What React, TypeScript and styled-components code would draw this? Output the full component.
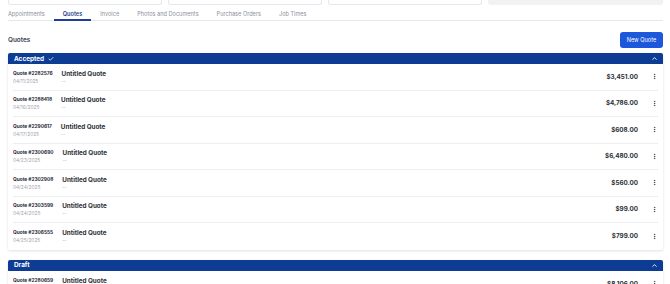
import React from "react";
import styled, { createGlobalStyle } from "styled-components";
import { Check, ChevronUp, EllipsisVertical } from "lucide-react";

type Quote = { number: string; date: string; title: string; total: string };

const accepted: Quote[] = [
	{ number: "2282576", date: "04/11/2025", title: "Untitled Quote", total: "$3,451.00" },
	{ number: "2288418", date: "04/16/2025", title: "Untitled Quote", total: "$4,786.00" },
	{ number: "2290617", date: "04/17/2025", title: "Untitled Quote", total: "$608.00" },
	{ number: "2300690", date: "04/23/2025", title: "Untitled Quote", total: "$6,480.00" },
	{ number: "2302908", date: "04/24/2025", title: "Untitled Quote", total: "$560.00" },
	{ number: "2303599", date: "04/24/2025", title: "Untitled Quote", total: "$99.00" },
	{ number: "2306555", date: "04/25/2025", title: "Untitled Quote", total: "$799.00" },
];

const drafts: Quote[] = [
	{ number: "2280659", date: "04/10/2025", title: "Untitled Quote", total: "$8,106.00" },
];

const tabs = ["Appointments", "Quotes", "Invoice", "Photos and Documents", "Purchase Orders", "Job Times"];

const GlobalStyle = createGlobalStyle`
	html {
		overflow: hidden;
	}
	body {
		margin: 0;
		background: #ffffff;
		font-family: Inter, "Liberation Sans", sans-serif;
		color: #1f2937;
	}
`;

const QuoteGroup = ({ label, quotes, done }: { label: string; quotes: Quote[]; done?: boolean }) => (
	<GroupCard>
		<GroupHeader>
			<GroupLabel>
				{label}
				{done && <Check size={6} strokeWidth={3} />}
			</GroupLabel>
			<ChevronUp size={7} strokeWidth={3} />
		</GroupHeader>
		{quotes.map((q) => (
			<QuoteRow key={q.number}>
				<QuoteMeta>
					<QuoteNumber>Quote #{q.number}</QuoteNumber>
					<SubText>{q.date}</SubText>
				</QuoteMeta>
				<QuoteInfo>
					<QuoteTitle>{q.title}</QuoteTitle>
					<SubText>--</SubText>
				</QuoteInfo>
				<QuoteTotal>{q.total}</QuoteTotal>
				<MenuButton>
					<EllipsisVertical size={7} strokeWidth={2.5} />
				</MenuButton>
			</QuoteRow>
		))}
	</GroupCard>
);

export default function App() {
	return (
		<Page>
			<GlobalStyle />
			<FieldRow>
				<Field />
				<Field />
				<Field />
				<Field $disabled />
			</FieldRow>
			<TabBar>
				{tabs.map((t) => (
					<Tab key={t} $active={t === "Quotes"}>
						{t}
					</Tab>
				))}
			</TabBar>
			<SectionHeader>
				<SectionTitle>Quotes</SectionTitle>
				<PrimaryButton>New Quote</PrimaryButton>
			</SectionHeader>
			<QuoteGroup label="Accepted" quotes={accepted} done />
			<QuoteGroup label="Draft" quotes={drafts} />
		</Page>
	);
}

const Page = styled.div`
	padding: 0 7px 0 8px;
	display: flex;
	flex-direction: column;
`;

const FieldRow = styled.div`
	display: grid;
	grid-template-columns: 154px 154px 154px 1fr;
	gap: 6px;
	height: 5px;
`;

const Field = styled.div<{ $disabled?: boolean }>`
	border: 1px solid #e5e7eb;
	border-top: none;
	border-radius: 0 0 3px 3px;
	background: ${({ $disabled }) => ($disabled ? "#f1f2f4" : "#ffffff")};
	border-color: ${({ $disabled }) => ($disabled ? "#f1f2f4" : "#e5e7eb")};
`;

const TabBar = styled.div`
	display: flex;
	margin-top: 3px;
	border-bottom: 1px solid #e5e7eb;
`;

const Tab = styled.div<{ $active?: boolean }>`
	padding: 2px 9px 1px;
	font-size: 5.6px;
	line-height: 8px;
	font-weight: ${({ $active }) => ($active ? 600 : 400)};
	color: ${({ $active }) => ($active ? "#1e3a8a" : "#8b9099")};
	border-bottom: 2px solid ${({ $active }) => ($active ? "#1e3f99" : "transparent")};
	margin-bottom: -1px;

	&:first-child {
		padding-left: 0;
	}
`;

const SectionHeader = styled.div`
	display: flex;
	align-items: center;
	justify-content: space-between;
	margin-top: 11px;
	margin-bottom: 5px;
`;

const SectionTitle = styled.div`
	font-size: 6.4px;
	font-weight: 600;
	color: #374151;
`;

const PrimaryButton = styled.button`
	width: 43px;
	height: 16px;
	padding: 0;
	border: none;
	border-radius: 3px;
	background: #1d57db;
	color: #ffffff;
	font-family: Inter, "Liberation Sans", sans-serif;
	font-size: 5.6px;
	cursor: pointer;
`;

const GroupCard = styled.div`
	background: #ffffff;
	border-radius: 2px;
	box-shadow: 0 1px 3px rgba(0, 0, 0, 0.12);
	margin-bottom: 10px;
`;

const GroupHeader = styled.div`
	display: flex;
	align-items: center;
	justify-content: space-between;
	height: 11px;
	padding: 0 5px 0 6px;
	background: #0c3c93;
	color: #ffffff;
	border-radius: 2px 2px 0 0;
`;

const GroupLabel = styled.div`
	display: flex;
	align-items: center;
	gap: 4px;
	font-size: 6.4px;
	font-weight: 700;
`;

const QuoteRow = styled.div`
	display: flex;
	align-items: center;
	gap: 9px;
	height: 26.5px;
	margin: 0 5px;
	box-sizing: border-box;
	border-bottom: 1px solid #eceef1;

	&:last-child {
		border-bottom: none;
	}
`;

const QuoteMeta = styled.div`
	display: flex;
	flex-direction: column;
	gap: 2px;
`;

const QuoteNumber = styled.div`
	font-size: 4.8px;
	font-weight: 700;
	line-height: 6px;
	color: #1f2937;
`;

const QuoteInfo = styled.div`
	display: flex;
	flex-direction: column;
	flex: 1;
`;

const QuoteTitle = styled.div`
	font-size: 6.3px;
	font-weight: 700;
	line-height: 8px;
	color: #2b2f36;
`;

const SubText = styled.div`
	font-size: 4.8px;
	line-height: 6px;
	color: #9ca3af;
`;

const QuoteTotal = styled.div`
	font-size: 6.3px;
	font-weight: 700;
	color: #2b2f36;
	margin-right: 3px;
`;

const MenuButton = styled.div`
	display: flex;
	align-items: center;
	justify-content: center;
	width: 8px;
	color: #374151;
`;
